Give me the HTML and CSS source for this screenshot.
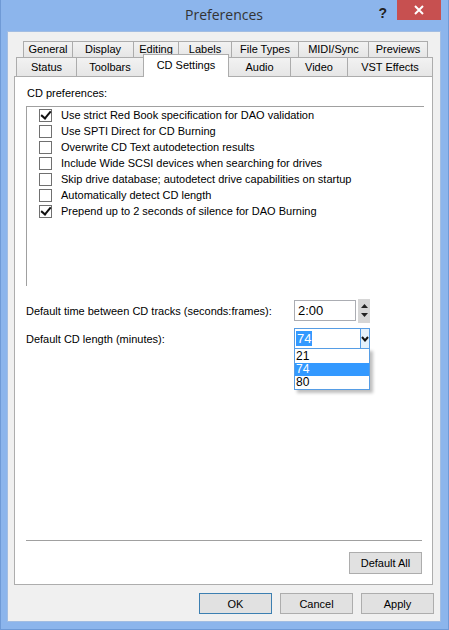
FILE: index.html
```html
<!DOCTYPE html>
<html lang="en">

<head>
    <meta charset="UTF-8">
    <title>Preferences</title>
    <link rel="stylesheet" href="styles.css">
</head>

<body>

    <div class="window">
        <div class="titlebar">
            <span></span>
            <span class="title">Preferences</span>
            <div class="caption-buttons">
                <span class="help">?</span>
                <span class="close">
                    <svg width="10" height="10" viewBox="0 0 10 10">
                        <path d="M1 1 L9 9 M9 1 L1 9" stroke="#fff" stroke-width="2" fill="none" />
                    </svg>
                </span>
            </div>
        </div>

        <div class="client">
            <div class="tabs">
                <div class="tab-row back">
                    <div class="tab w49">General</div>
                    <div class="tab w61">Display</div>
                    <div class="tab w45">Editing</div>
                    <div class="tab w53">Labels</div>
                    <div class="tab w67">File Types</div>
                    <div class="tab w70">MIDI/Sync</div>
                    <div class="tab w59 last">Previews</div>
                </div>
                <div class="tab-row front">
                    <div class="tab w60">Status</div>
                    <div class="tab w67">Toolbars</div>
                    <div class="tab w86 selected">CD Settings</div>
                    <div class="tab w61">Audio</div>
                    <div class="tab w57">Video</div>
                    <div class="tab w85 last">VST Effects</div>
                </div>
            </div>

            <div class="panel">
                <div class="group-label">CD preferences:</div>
                <div class="listbox">
                    <div class="item"><span class="check on"></span>Use strict Red Book specification for DAO validation</div>
                    <div class="item"><span class="check"></span>Use SPTI Direct for CD Burning</div>
                    <div class="item"><span class="check"></span>Overwrite CD Text autodetection results</div>
                    <div class="item"><span class="check"></span>Include Wide SCSI devices when searching for drives</div>
                    <div class="item"><span class="check"></span>Skip drive database; autodetect drive capabilities on startup</div>
                    <div class="item"><span class="check"></span>Automatically detect CD length</div>
                    <div class="item"><span class="check on"></span>Prepend up to 2 seconds of silence for DAO Burning</div>
                </div>

                <div class="field-row spin-row">
                    <label class="field-label">Default time between CD tracks (seconds:frames):</label>
                    <div class="spin-input">2:00</div>
                    <div class="spin-buttons">
                        <svg width="7" height="4" viewBox="0 0 7 4"><path d="M0 4 L3.5 0 L7 4 Z" fill="#222" /></svg>
                        <svg width="7" height="4" viewBox="0 0 7 4"><path d="M0 0 L3.5 4 L7 0 Z" fill="#222" /></svg>
                    </div>
                </div>

                <div class="field-row combo-row">
                    <label class="field-label">Default CD length (minutes):</label>
                    <div class="combo">
                        <span class="combo-value"><span class="hl">74</span></span>
                        <span class="combo-arrow">
                            <svg width="8" height="6" viewBox="0 0 8 6"><path d="M1 1 L4 4.5 L7 1" stroke="#111" stroke-width="2" fill="none" /></svg>
                        </span>
                        <div class="dropdown">
                            <div class="option">21</div>
                            <div class="option active">74</div>
                            <div class="option">80</div>
                        </div>
                    </div>
                </div>

                <div class="separator"></div>
                <div class="panel-footer">
                    <button class="btn">Default All</button>
                </div>
            </div>

            <div class="dialog-buttons">
                <button class="btn default">OK</button>
                <button class="btn">Cancel</button>
                <button class="btn">Apply</button>
            </div>
        </div>
    </div>

</body>

</html>
```

FILE: styles.css
```css
* {
    padding: 0px;
    margin: 0px;
    box-sizing: border-box;
}

body {
    font-family: "Liberation Sans", Arial, sans-serif;
    font-size: 11px;
    color: #000;
    background: #fff;
}

.window {
    width: 449px;
    height: 630px;
    background-color: #8cb5ec;
    border: 1px solid #6f9ad6;
    border-top: none;
    padding: 0 7px 7px 6px;
    display: flex;
    flex-direction: column;
}

/* title bar */
.titlebar {
    height: 31px;
    display: grid;
    grid-template-columns: 1fr auto 1fr;
}

.title {
    font-family: "Open Sans", sans-serif;
    font-size: 14px;
    color: #333;
    line-height: 30px;
    text-align: center;
}

.caption-buttons {
    display: flex;
    justify-content: flex-end;
    align-items: flex-start;
}

.help {
    font-family: "Liberation Sans", sans-serif;
    font-weight: bold;
    font-size: 14px;
    color: #222;
    margin-top: 5px;
    margin-right: 10px;
}

.close {
    width: 44px;
    height: 20px;
    background-color: #c75050;
    display: flex;
    align-items: center;
    justify-content: center;
}

/* client area */
.client {
    flex: 1;
    background-color: #f0f0f0;
    border: 1px solid #a2bde2;
}

.tabs {
    padding-top: 9px;
}

.tab-row {
    display: flex;
    align-items: flex-start;
}

.tab-row.back {
    margin-left: 15px;
    height: 16px;
}

.tab-row.front {
    margin-left: 8px;
    height: 19px;
}

.tab {
    background: linear-gradient(#f2f2f2, #e6e6e6);
    border-top: 1px solid #acacac;
    border-left: 1px solid #acacac;
    text-align: center;
    line-height: 15px;
}

.back .tab {
    height: 16px;
}

.front .tab {
    height: 19px;
    padding-top: 2px;
}

.tab.last {
    border-right: 1px solid #acacac;
}

.tab.selected {
    position: relative;
    z-index: 1;
    height: 23px;
    margin-top: -3px;
    background: #fff;
    border-right: 1px solid #acacac;
    padding-top: 3px;
}

.tab.selected + .tab {
    border-left: none;
}

.w45 { width: 45px; }
.w49 { width: 49px; }
.w53 { width: 53px; }
.w57 { width: 57px; }
.w59 { width: 60px; }
.w60 { width: 60px; }
.w61 { width: 61px; }
.w67 { width: 67px; }
.w70 { width: 70px; }
.w85 { width: 86px; }
.w86 { width: 86px; }

/* tab page */
.panel {
    margin-left: 6px;
    width: 419px;
    height: 509px;
    background-color: #fff;
    border: 1px solid #adadad;
    padding-left: 11px;
    padding-right: 10px;
    padding-bottom: 10px;
    display: flex;
    flex-direction: column;
}

.group-label {
    margin-top: 8px;
    padding-left: 1px;
    line-height: 16px;
}

.listbox {
    margin-top: 5px;
    width: 398px;
    height: 180px;
    border-top: 1px solid #a0a0a0;
    border-left: 1px solid #a0a0a0;
}

.item {
    height: 16px;
    display: flex;
    align-items: center;
    white-space: nowrap;
}

.check {
    width: 13px;
    height: 13px;
    margin-left: 12px;
    margin-right: 9px;
    border: 1px solid #707070;
    background: #fff;
    display: flex;
    align-items: center;
    justify-content: center;
}

.check.on::after {
    content: "";
    width: 4px;
    height: 8px;
    border-right: 2px solid #111;
    border-bottom: 2px solid #111;
    transform: translate(0, -1px) rotate(40deg);
}

.field-row {
    display: flex;
    align-items: center;
    height: 21px;
}

.spin-row {
    margin-top: 14px;
}

.combo-row {
    margin-top: 7px;
}

.field-label {
    width: 268px;
    white-space: nowrap;
}

.spin-input {
    width: 62px;
    height: 21px;
    border: 1px solid #abadb3;
    font-size: 13px;
    line-height: 19px;
    padding-left: 3px;
}

.spin-buttons {
    margin-left: 2px;
    width: 12px;
    height: 24px;
    background-color: #d6d6d6;
    display: flex;
    flex-direction: column;
    align-items: center;
    justify-content: space-around;
    padding: 3px 0;
}

.combo {
    position: relative;
    width: 76px;
    height: 21px;
    border: 1px solid #569de5;
    display: flex;
}

.combo-value {
    flex: 1;
    padding: 2px 0 0 1px;
    font-size: 13px;
}

.hl {
    background-color: #3399ff;
    color: #fff;
    padding: 0 1px;
    line-height: 15px;
    display: inline-block;
}

.combo-arrow {
    width: 9px;
    border-left: 1px solid #569de5;
    background-color: #e5f1fb;
    display: flex;
    align-items: center;
    justify-content: center;
}

.dropdown {
    position: absolute;
    top: 19px;
    left: -1px;
    width: 76px;
    height: 42px;
    background: #fff;
    border: 1px solid #569de5;
    box-shadow: 3px 3px 3px rgba(0, 0, 0, 0.25);
    padding-top: 1px;
    font-size: 12px;
}

.option {
    height: 13px;
    line-height: 13px;
    padding-left: 1px;
    overflow: hidden;
}

.option.active {
    background-color: #3399ff;
    color: #fff;
}

.separator {
    margin-top: auto;
    border-top: 1px solid #a0a0a0;
}

.panel-footer {
    display: flex;
    justify-content: flex-end;
    margin-top: 11px;
}

.btn {
    font-family: "Liberation Sans", Arial, sans-serif;
    font-size: 11px;
    width: 73px;
    height: 22px;
    background-color: #e1e1e1;
    border: 1px solid #adadad;
    color: #000;
}

.panel-footer .btn {
    height: 22px;
}

.dialog-buttons {
    display: flex;
    justify-content: flex-end;
    gap: 8px;
    margin-top: 8px;
    padding-right: 6px;
}

.dialog-buttons .btn {
    height: 21px;
}

.btn.default {
    border-color: #3c7fb1;
}
```
